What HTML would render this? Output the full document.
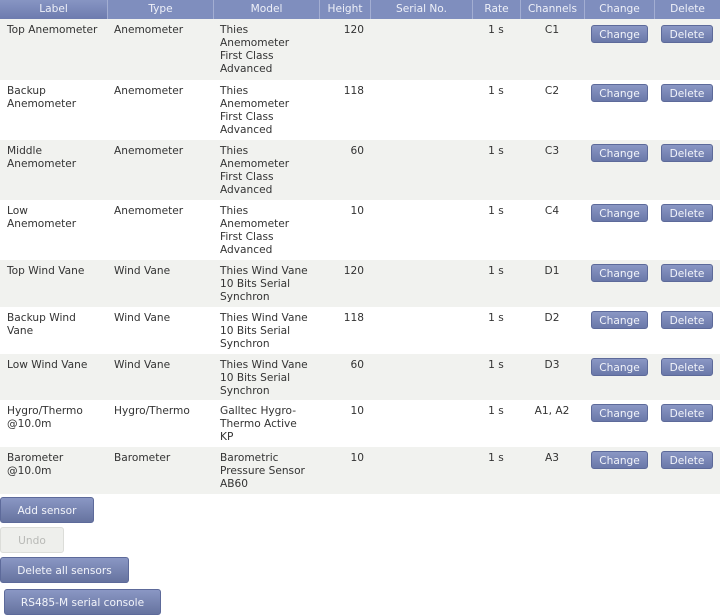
<!DOCTYPE html>
<html><head><meta charset="utf-8"><style>
*{margin:0;padding:0;box-sizing:border-box}
body{width:720px;height:616px;background:#fff;font-family:"DejaVu Sans","Liberation Sans",sans-serif;font-size:10.6px;color:#333;position:relative;overflow:hidden}
.hd{position:absolute;top:0;left:0;width:720px;height:19px;background:#7f8ebe}
.hc{position:absolute;top:0;height:19px;line-height:18px;text-align:center;color:#eef0f8;border-left:1px solid #a3aed2}
.row{position:absolute;left:0;width:720px}
.g{background:#f1f2ef}
.c{position:absolute;top:5px;line-height:13px;white-space:nowrap}
.b{position:absolute;height:18px;line-height:18px;text-align:center;color:#f2f4fa;border-radius:3px;border:1px solid #5d6a9a;background:linear-gradient(#8a97c4,#6a78a9)}
.bb{position:absolute;height:26px;line-height:26px;text-align:center;color:#f2f4fa;border-radius:3px;border:1px solid #5d6a9a;background:linear-gradient(#8a97c4,#66739f)}
</style></head><body>
<div class="hd">
<div class="hc" style="left:0;width:107px;border-left:none;background:linear-gradient(#8795c3,#6d7bae)">Label</div>
<div class="hc" style="left:107px;width:106px">Type</div>
<div class="hc" style="left:213px;width:106px">Model</div>
<div class="hc" style="left:319px;width:51px">Height</div>
<div class="hc" style="left:370px;width:102px">Serial No.</div>
<div class="hc" style="left:472px;width:48px">Rate</div>
<div class="hc" style="left:520px;width:64px">Channels</div>
<div class="hc" style="left:584px;width:70px">Change</div>
<div class="hc" style="left:654px;width:66px">Delete</div>
</div>

<div class="row g" style="top:19px;height:61px">
<div class="c" style="left:7px">Top Anemometer</div><div class="c" style="left:114px">Anemometer</div>
<div class="c" style="left:220px">Thies<br>Anemometer<br>First Class<br>Advanced</div>
<div class="c" style="left:319px;width:45px;text-align:right">120</div>
<div class="c" style="left:472px;width:48px;text-align:center">1 s</div>
<div class="c" style="left:520px;width:64px;text-align:center">C1</div>
<div class="b" style="left:591px;top:6px;width:57px">Change</div><div class="b" style="left:661px;top:6px;width:52px">Delete</div>
</div>

<div class="row" style="top:80px;height:60px">
<div class="c" style="left:7px">Backup<br>Anemometer</div><div class="c" style="left:114px">Anemometer</div>
<div class="c" style="left:220px">Thies<br>Anemometer<br>First Class<br>Advanced</div>
<div class="c" style="left:319px;width:45px;text-align:right">118</div>
<div class="c" style="left:472px;width:48px;text-align:center">1 s</div>
<div class="c" style="left:520px;width:64px;text-align:center">C2</div>
<div class="b" style="left:591px;top:4px;width:57px">Change</div><div class="b" style="left:661px;top:4px;width:52px">Delete</div>
</div>

<div class="row g" style="top:140px;height:60px">
<div class="c" style="left:7px">Middle<br>Anemometer</div><div class="c" style="left:114px">Anemometer</div>
<div class="c" style="left:220px">Thies<br>Anemometer<br>First Class<br>Advanced</div>
<div class="c" style="left:319px;width:45px;text-align:right">60</div>
<div class="c" style="left:472px;width:48px;text-align:center">1 s</div>
<div class="c" style="left:520px;width:64px;text-align:center">C3</div>
<div class="b" style="left:591px;top:4px;width:57px">Change</div><div class="b" style="left:661px;top:4px;width:52px">Delete</div>
</div>

<div class="row" style="top:200px;height:60px">
<div class="c" style="left:7px">Low<br>Anemometer</div><div class="c" style="left:114px">Anemometer</div>
<div class="c" style="left:220px">Thies<br>Anemometer<br>First Class<br>Advanced</div>
<div class="c" style="left:319px;width:45px;text-align:right">10</div>
<div class="c" style="left:472px;width:48px;text-align:center">1 s</div>
<div class="c" style="left:520px;width:64px;text-align:center">C4</div>
<div class="b" style="left:591px;top:4px;width:57px">Change</div><div class="b" style="left:661px;top:4px;width:52px">Delete</div>
</div>

<div class="row g" style="top:260px;height:47px">
<div class="c" style="left:7px">Top Wind Vane</div><div class="c" style="left:114px">Wind Vane</div>
<div class="c" style="left:220px">Thies Wind Vane<br>10 Bits Serial<br>Synchron</div>
<div class="c" style="left:319px;width:45px;text-align:right">120</div>
<div class="c" style="left:472px;width:48px;text-align:center">1 s</div>
<div class="c" style="left:520px;width:64px;text-align:center">D1</div>
<div class="b" style="left:591px;top:4px;width:57px">Change</div><div class="b" style="left:661px;top:4px;width:52px">Delete</div>
</div>

<div class="row" style="top:307px;height:47px">
<div class="c" style="left:7px">Backup Wind<br>Vane</div><div class="c" style="left:114px">Wind Vane</div>
<div class="c" style="left:220px">Thies Wind Vane<br>10 Bits Serial<br>Synchron</div>
<div class="c" style="left:319px;width:45px;text-align:right">118</div>
<div class="c" style="left:472px;width:48px;text-align:center">1 s</div>
<div class="c" style="left:520px;width:64px;text-align:center">D2</div>
<div class="b" style="left:591px;top:4px;width:57px">Change</div><div class="b" style="left:661px;top:4px;width:52px">Delete</div>
</div>

<div class="row g" style="top:354px;height:46px">
<div class="c" style="left:7px">Low Wind Vane</div><div class="c" style="left:114px">Wind Vane</div>
<div class="c" style="left:220px">Thies Wind Vane<br>10 Bits Serial<br>Synchron</div>
<div class="c" style="left:319px;width:45px;text-align:right">60</div>
<div class="c" style="left:472px;width:48px;text-align:center">1 s</div>
<div class="c" style="left:520px;width:64px;text-align:center">D3</div>
<div class="b" style="left:591px;top:4px;width:57px">Change</div><div class="b" style="left:661px;top:4px;width:52px">Delete</div>
</div>

<div class="row" style="top:400px;height:47px">
<div class="c" style="left:7px">Hygro/Thermo<br>@10.0m</div><div class="c" style="left:114px">Hygro/Thermo</div>
<div class="c" style="left:220px">Galltec Hygro-<br>Thermo Active<br>KP</div>
<div class="c" style="left:319px;width:45px;text-align:right">10</div>
<div class="c" style="left:472px;width:48px;text-align:center">1 s</div>
<div class="c" style="left:520px;width:64px;text-align:center">A1, A2</div>
<div class="b" style="left:591px;top:4px;width:57px">Change</div><div class="b" style="left:661px;top:4px;width:52px">Delete</div>
</div>

<div class="row g" style="top:447px;height:47px">
<div class="c" style="left:7px">Barometer<br>@10.0m</div><div class="c" style="left:114px">Barometer</div>
<div class="c" style="left:220px">Barometric<br>Pressure Sensor<br>AB60</div>
<div class="c" style="left:319px;width:45px;text-align:right">10</div>
<div class="c" style="left:472px;width:48px;text-align:center">1 s</div>
<div class="c" style="left:520px;width:64px;text-align:center">A3</div>
<div class="b" style="left:591px;top:4px;width:57px">Change</div><div class="b" style="left:661px;top:4px;width:52px">Delete</div>
</div>

<div class="bb" style="left:0;top:497px;width:94px">Add sensor</div>
<div class="bb" style="left:0;top:527px;width:64px;background:#eeefec;border-color:#dcddd9;color:#b8b9b6">Undo</div>
<div class="bb" style="left:0;top:557px;width:129px">Delete all sensors</div>
<div class="bb" style="left:4px;top:589px;width:157px">RS485-M serial console</div>
</body></html>
